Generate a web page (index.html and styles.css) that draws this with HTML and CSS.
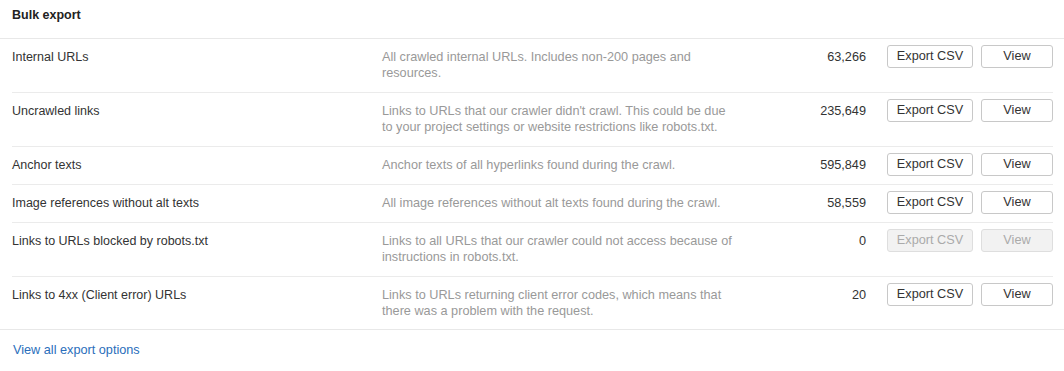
FILE: index.html
```html
<!DOCTYPE html>
<html>
<head>
<meta charset="utf-8">
<link rel="stylesheet" href="styles.css">
</head>
<body>
<div class="panel">
  <div class="header">Bulk export</div>
  <div class="list">
    <div class="row">
      <div class="name">Internal URLs</div>
      <div class="desc">All crawled internal URLs. Includes non-200 pages and resources.</div>
      <div class="count">63,266</div>
      <div class="actions"><button class="btn btn-export">Export CSV</button><button class="btn btn-view">View</button></div>
    </div>
    <div class="row">
      <div class="name">Uncrawled links</div>
      <div class="desc">Links to URLs that our crawler didn't crawl. This could be due to your project settings or website restrictions like robots.txt.</div>
      <div class="count">235,649</div>
      <div class="actions"><button class="btn btn-export">Export CSV</button><button class="btn btn-view">View</button></div>
    </div>
    <div class="row">
      <div class="name">Anchor texts</div>
      <div class="desc">Anchor texts of all hyperlinks found during the crawl.</div>
      <div class="count">595,849</div>
      <div class="actions"><button class="btn btn-export">Export CSV</button><button class="btn btn-view">View</button></div>
    </div>
    <div class="row">
      <div class="name">Image references without alt texts</div>
      <div class="desc">All image references without alt texts found during the crawl.</div>
      <div class="count">58,559</div>
      <div class="actions"><button class="btn btn-export">Export CSV</button><button class="btn btn-view">View</button></div>
    </div>
    <div class="row">
      <div class="name">Links to URLs blocked by robots.txt</div>
      <div class="desc">Links to all URLs that our crawler could not access because of instructions in robots.txt.</div>
      <div class="count">0</div>
      <div class="actions"><button class="btn btn-export" disabled>Export CSV</button><button class="btn btn-view" disabled>View</button></div>
    </div>
    <div class="row">
      <div class="name">Links to 4xx (Client error) URLs</div>
      <div class="desc">Links to URLs returning client error codes, which means that there was a problem with the request.</div>
      <div class="count">20</div>
      <div class="actions"><button class="btn btn-export">Export CSV</button><button class="btn btn-view">View</button></div>
    </div>
  </div>
  <div class="footer"><a class="more" href="#">View all export options</a></div>
</div>
</body>
</html>
```
FILE: styles.css
```css
html, body {
  margin: 0;
  padding: 0;
  background: #fff;
}
body {
  font-family: "Liberation Sans", Arial, Helvetica, sans-serif;
  font-size: 12.7px;
  color: #333;
}
.panel {
  width: 1064px;
}
.header {
  font-weight: bold;
  font-size: 12.5px;
  line-height: 18px;
  padding: 6px 12px 14px;
  color: #222;
}
.list {
  border-top: 1px solid #e8e8e8;
  border-bottom: 1px solid #e8e8e8;
  padding: 0 11px 0 12px;
}
.row {
  display: flex;
  align-items: flex-start;
  padding: 6px 0 8px;
  border-bottom: 1px solid #ebebeb;
}
.row:last-child {
  border-bottom: none;
  padding-bottom: 7px;
}
.name,
.desc,
.count {
  line-height: 16px;
  margin: 4px 0 3px;
}
.name {
  width: 370px;
  flex: none;
  font-size: 12.5px;
}
.desc {
  width: 354px;
  flex: none;
  color: #999;
}
.count {
  flex: 1;
  text-align: right;
  padding-right: 21px;
}
.actions {
  display: flex;
  gap: 8px;
  flex: none;
}
.btn {
  font-family: inherit;
  font-size: 12.7px;
  color: #333;
  background: #fff;
  border: 1px solid #c8c8c8;
  border-radius: 3px;
  height: 23px;
  padding: 0;
  margin: 0;
  line-height: 21px;
}
.btn-export {
  width: 86px;
}
.btn-view {
  width: 72px;
}
.btn:disabled {
  background: #f2f2f2;
  border-color: #dedede;
  color: #aaa;
}
.footer {
  padding: 11px 13px;
  line-height: 18px;
}
.more {
  color: #2a6ebb;
  text-decoration: none;
}
```
